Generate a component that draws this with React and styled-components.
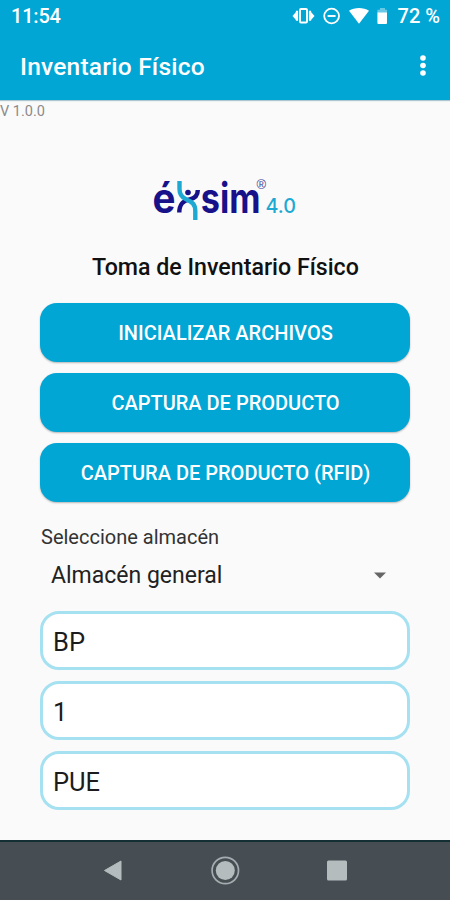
import React, { useState } from 'react';
import styled, { createGlobalStyle } from 'styled-components';

const GlobalStyle = createGlobalStyle`
  * {
    box-sizing: border-box;
  }

  body {
    margin: 0;
    background: #fafafa;
    font-family: Roboto, 'Liberation Sans', sans-serif;
  }
`;

const Screen = styled.div`
  display: flex;
  flex-direction: column;
  width: 450px;
  height: 900px;
  background: #fafafa;
  overflow: hidden;
`;

const Header = styled.header`
  height: 100px;
  flex-shrink: 0;
  background: #02a6d5;
  color: #fff;
  box-shadow: 0 1px 1px rgba(0, 80, 110, 0.3);
`;

const StatusBar = styled.div`
  display: flex;
  justify-content: space-between;
  align-items: center;
  height: 32px;
  padding: 0 10px 0 11px;
  font-size: 20px;
  font-weight: 500;
  line-height: 32px;
`;

const Clock = styled.span`
  letter-spacing: -0.2px;
`;

const StatusIcons = styled.div`
  display: flex;
  align-items: center;

  svg {
    display: block;
  }
`;

const Battery = styled.span`
  margin-left: 10px;
`;

const Toolbar = styled.div`
  display: flex;
  justify-content: space-between;
  align-items: center;
  height: 68px;
  padding: 0 22px 0 20px;
`;

const ToolbarTitle = styled.h1`
  margin: 0;
  padding-top: 2px;
  font-size: 24.5px;
  font-weight: 500;
  line-height: 70px;
  letter-spacing: 0.23px;
`;

const MenuButton = styled.button`
  display: flex;
  padding: 0;
  border: 0;
  background: none;
  cursor: pointer;
`;

const Version = styled.div`
  height: 24px;
  font-size: 14.5px;
  line-height: 23px;
  color: #8b8b8b;
`;

const Content = styled.main`
  flex: 1;
  display: flex;
  flex-direction: column;
  padding: 44px 40px 0;
`;

const Logo = styled.svg`
  display: block;
  align-self: center;
  flex-shrink: 0;
`;

const Heading = styled.h2`
  margin: 28px 0 21px;
  padding-left: 1px;
  font-size: 23.2px;
  font-weight: 500;
  line-height: 30px;
  text-align: center;
  color: #111;
`;

const Stack = styled.div`
  display: flex;
  flex-direction: column;
  gap: ${(props) => props.$gap}px;
`;

const ActionButton = styled.button`
  height: 59px;
  padding: 0 0 0 1px;
  border: 0;
  border-radius: 17px;
  background: #02a6d5;
  box-shadow: 0 1px 2px rgba(0, 0, 0, 0.28);
  color: #fff;
  font-family: inherit;
  font-size: 20px;
  font-weight: 500;
  line-height: 60px;
  text-transform: uppercase;
  cursor: pointer;
`;

const Label = styled.label`
  margin-top: 22px;
  padding-left: 1px;
  font-size: 20px;
  line-height: 26px;
  color: #333;
`;

const Select = styled.div`
  display: flex;
  justify-content: space-between;
  align-items: center;
  height: 51px;
  margin-bottom: 10px;
  padding: 0 24px 0 11px;
  font-size: 23px;
  color: #222;
`;

const Field = styled.input`
  width: 100%;
  height: 59px;
  padding: 2px 10px 0;
  border: 3px solid #a6e1f1;
  border-radius: 19px;
  outline: none;
  background: #fff;
  color: #1c1c1c;
  font-family: inherit;
  font-size: 25.5px;
`;

const NavBar = styled.nav`
  display: flex;
  justify-content: center;
  align-items: center;
  height: 60px;
  flex-shrink: 0;
  border-top: 2px solid #142f33;
  background: #464e53;
`;

const StatusGlyphs = () => (
  <svg width="96" height="20" viewBox="0 0 96 20" fill="none">
    <rect x="8" y="3" width="7" height="13.5" rx="1" stroke="#fff" strokeWidth="1.9" />
    <path d="M5 4.8v10M18 4.8v10" stroke="#fff" strokeWidth="2.2" />
    <path d="M4 6v8L0.5 10zM19 6v8l3.5-4z" fill="#fff" />
    <circle cx="39.6" cy="10" r="7.4" stroke="#fff" strokeWidth="1.8" />
    <path d="M35.6 10h8" stroke="#fff" strokeWidth="1.9" />
    <path d="M57 4.8c5.6-3.7 14.4-3.7 20 0L67 17.8z" fill="#fff" />
    <path d="M88 2h5v1.8h2V7H85.4V3.8H88z" fill="#fff" opacity="0.4" />
    <path d="M85.4 6.5H95V17a1 1 0 0 1-1 1h-7.6a1 1 0 0 1-1-1z" fill="#fff" />
  </svg>
);

const ExsimLogo = () => (
  <Logo width="146" height="56" viewBox="0 -8 146 56">
    <g fill="#17128a" fontFamily="Inter, sans-serif" fontWeight="700" fontSize="41">
      <text x="0.5" y="36.5" textLength="23" lengthAdjust="spacingAndGlyphs">é</text>
      <text x="48.8" y="36.5" textLength="59.7" lengthAdjust="spacingAndGlyphs">sim</text>
    </g>
    {/* the "x" is a figure with raised arms */}
    <g fill="none" strokeWidth="4.4">
      <path d="M45.8 14c0 6-3 8.300-8 9.300-7 1.400-10.500 4.700-10.500 13.200" stroke="#17128a" />
      <path d="M27.5 5v8c0 5 1.500 8 6.500 10.200 6 2.600 9.300 4.800 9.300 11.800v9" stroke="#1ea9d3" />
    </g>
    <circle cx="36" cy="16.5" r="2.8" fill="#17128a" />
    <text x="104.5" y="13.2" fill="#3d3a92" fontFamily="'Liberation Sans', sans-serif" fontSize="13">®</text>
    <text x="113.5" y="36.5" fill="#1ea9d3" fontFamily="Inter, sans-serif" fontWeight="500" fontSize="20" textLength="30.5" lengthAdjust="spacingAndGlyphs">4.0</text>
  </Logo>
);

const NavGlyphs = () => (
  <svg width="260" height="32" viewBox="0 0 260 32">
    <path d="M9.5 15.5L26 6v19z" fill="#b5bcbe" stroke="#b5bcbe" strokeLinejoin="round" />
    <circle cx="130.3" cy="15.5" r="13.2" fill="none" stroke="#a5adb0" strokeWidth="1.7" />
    <circle cx="130.3" cy="15.5" r="9.5" fill="#b5bcbe" />
    <rect x="232" y="5.5" width="20" height="20" rx="1.5" fill="#b5bcbe" />
  </svg>
);

const actions = ['Inicializar archivos', 'Captura de producto', 'Captura de producto (RFID)'];

const App = () => {
  const [fields, setFields] = useState(['BP', '1', 'PUE']);

  const updateField = (index, value) => {
    setFields(fields.map((field, i) => (i === index ? value : field)));
  };

  return (
    <Screen>
      <GlobalStyle />
      <Header>
        <StatusBar>
          <Clock>11:54</Clock>
          <StatusIcons>
            <StatusGlyphs />
            <Battery>72 %</Battery>
          </StatusIcons>
        </StatusBar>
        <Toolbar>
          <ToolbarTitle>Inventario Físico</ToolbarTitle>
          <MenuButton aria-label="Menú">
            <svg width="10" height="24" viewBox="0 0 10 24" fill="#fff">
              <circle cx="5" cy="4" r="2.8" />
              <circle cx="5" cy="11.5" r="2.8" />
              <circle cx="5" cy="19" r="2.8" />
            </svg>
          </MenuButton>
        </Toolbar>
      </Header>
      <Version>V 1.0.0</Version>
      <Content>
        <ExsimLogo />
        <Heading>Toma de Inventario Físico</Heading>
        <Stack $gap={11}>
          {actions.map((action) => (
            <ActionButton key={action}>{action}</ActionButton>
          ))}
        </Stack>
        <Label>Seleccione almacén</Label>
        <Select>
          Almacén general
          <svg width="12" height="7" viewBox="0 0 12 7">
            <path d="M0 0.5h12l-6 6z" fill="#666" />
          </svg>
        </Select>
        <Stack $gap={11}>
          {fields.map((field, index) => (
            <Field key={index} value={field} onChange={(e) => updateField(index, e.target.value)} />
          ))}
        </Stack>
      </Content>
      <NavBar>
        <NavGlyphs />
      </NavBar>
    </Screen>
  );
};

export default App;
